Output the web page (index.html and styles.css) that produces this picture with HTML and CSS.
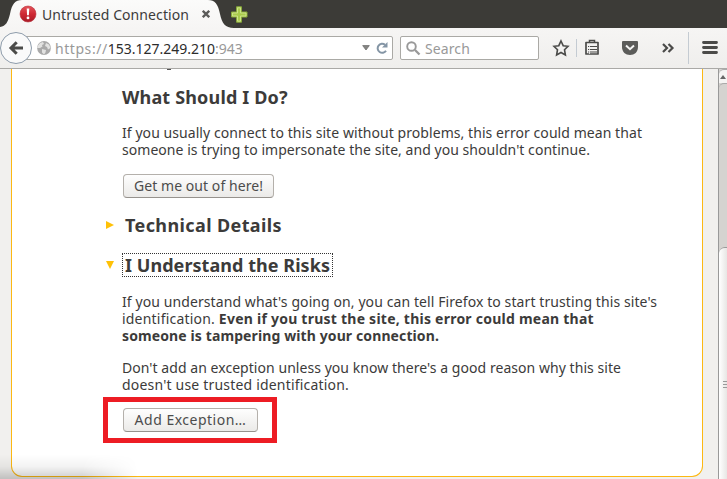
FILE: index.html
```
<!DOCTYPE html>
<html lang="en"><head><meta charset="utf-8"><title>Untrusted Connection</title><link rel="stylesheet" href="styles.css"></head>
<body>
<div class="browser">
  <header class="tabs">
    <svg class="tab-shape" width="240" height="28" viewBox="0 0 240 28"><defs><linearGradient id="tg" x2="0" y2="1"><stop stop-color="#fbfbfa"/><stop offset="1" stop-color="#f6f5f4"/></linearGradient></defs><path d="M0 28V27C6 26 8 22 10 14C12 4 15 0 22 0H208C215 0 218 4 220 14C222 23 225 28 234 28Z" fill="url(#tg)"/></svg>
    <div class="tab">
      <svg width="18" height="18" viewBox="0 0 18 18"><defs><linearGradient id="rg" x2="0" y2="1"><stop stop-color="#e2555b"/><stop offset=".5" stop-color="#cf2833"/><stop offset="1" stop-color="#a81a26"/></linearGradient></defs><circle cx="9" cy="9" r="8" fill="url(#rg)" stroke="#b8303a" stroke-width=".6"/><path d="M7.700 3.500h2.600L9.900 10.300H8.100Z" fill="#fff"/><circle cx="9" cy="12.900" r="1.400" fill="#fff"/></svg>
      <span class="tab-title">Untrusted Connection</span>
      <svg class="close" width="8" height="8" viewBox="0 0 8 8"><path d="M.8 .8L7.200 7.200M7.200 .8L.8 7.200" stroke="#5b5b59" stroke-width="2.300"/></svg>
    </div>
    <svg class="new-tab" width="17" height="17" viewBox="0 0 17 17"><path d="M5.500 .8h5V6h5.500v5h-5.500v5.200h-5V11H.5V6h5Z" fill="#a9cb4c" stroke="#88a93a" stroke-width="1"/><path d="M6.500 1.800h3V7H15v3H9.500v5.200h-3V10H1.500V7h5Z" fill="none" stroke="#cfe48f" stroke-width=".9"/></svg>
  </header>
  <nav class="toolbar">
    <div class="back"><svg width="16" height="16" viewBox="0 0 16 16"><path d="M8.700 2.300L3 8L8.700 13.700M3.500 8H15" fill="none" stroke="#4b4b49" stroke-width="3"/></svg></div>
    <div class="url">
      <svg width="14" height="14" viewBox="0 0 14 14"><circle cx="7" cy="7" r="6.900" fill="#a9a9a9"/><path d="M1 4.500L3 2L6 1L7 3L5 4L5.500 5.500L3 7L0 7ZM9 2L12 3.500L13.500 7L11 8.500L10 6L8 5ZM5 8L9 9L8.500 11.500L7 13.500L5 11.500Z" fill="#e2e2e1"/></svg>
      <span class="address"><span class="scheme">https://</span><span class="host">153.127.249.210</span><span class="port">:943</span></span>
      <svg class="drop" width="8" height="6" viewBox="0 0 8 6"><path d="M.7 .6H7.300L4 5Z" fill="#858583" stroke="#6f6f6d" stroke-width=".8"/></svg>
      <svg width="12" height="12" viewBox="0 0 12 12"><path d="M9 2.800A4.500 4.500 0 1 0 10 8.700" fill="none" stroke="#8495a5" stroke-width="2"/><path d="M6 5.500H11.500V0Z" fill="#8495a5"/></svg>
    </div>
    <div class="search"><svg width="15" height="15" viewBox="0 0 15 15"><circle cx="5.500" cy="5.500" r="4.300" fill="none" stroke="#999" stroke-width="1.900"/><path d="M9 9L13.500 13.500" stroke="#999" stroke-width="2.300"/></svg><span>Search</span></div>
    <svg class="tools" width="188" height="40" viewBox="0 0 188 40">
      <g fill="none" stroke="#4b4b49">
        <path d="M22 13L24.200 17.700L29 18.300L25.500 21.700L26.400 27L22 24.500L17.600 27L18.500 21.700L15 18.300L19.800 17.700Z" stroke-width="1.600"/>
        <path d="M47 14.500H59V26H47Z" stroke-width="1.700" stroke-linejoin="round"/><path d="M49 18.500H58M49 21.500H58M49 24H58" stroke-width="1.200"/><path d="M50.500 14V12.500H55.500V14" stroke-width="1.500"/>
        <path d="M124 16L128 20L124 24M129.500 16L133.500 20L129.500 24" stroke-width="2.200"/>
      </g>
      <path d="M50.500 16V26" stroke="#f4f3f2" stroke-width=".8"/>
      <path d="M37.500 11V29M149.500 4V36" stroke="#c4cbd2"/>
      <path d="M84 13H98Q99 13 99 14V19C99 24 95.500 27 91 27S83 24 83 19V14Q83 13 84 13Z" fill="#5c5c5a"/><path d="M87 17.500L91 21.200L95 17.500" fill="none" stroke="#f5f5f4" stroke-width="2"/>
      <path d="M164.500 14.500H177.500M164.500 19.500H177.500M164.500 24.500H177.500" stroke="#4b4b49" stroke-width="2.800" stroke-linecap="round"/>
    </svg>
  </nav>
  <main class="view">
    <div class="page">
      <article class="panel">
        <svg class="clipped" width="60" height="1"><path d="M45 0h4v1h-4Z" fill="#555"/></svg>
        <h2 class="what">What Should I Do?</h2>
        <p><span class="l1">If you usually connect to this site without problems, this error could mean that</span><span class="l2">someone is trying to impersonate the site, and you shouldn't continue.</span></p>
        <button class="leave">Get me out of here!</button>
        <div class="section tech"><svg width="8" height="8" viewBox="0 0 8 8"><path d="M0 0L8 4L0 8Z" fill="#ffc107"/></svg><h2>Technical Details</h2></div>
        <div class="section risks"><svg width="8" height="8" viewBox="0 0 8 8"><path d="M0 0H8L4 8Z" fill="#ffc107"/></svg><h2 class="focus">I Understand the Risks</h2></div>
        <p><span class="l3">If you understand what's going on, you can tell Firefox to start trusting this site's</span><span class="l4">identification. <b>Even if you trust the site, this error could mean that</b></span><b class="l5">someone is tampering with your connection.</b></p>
        <p class="reason"><span class="l6">Don't add an exception unless you know there's a good reason why this site</span><span class="l7">doesn't use trusted identification.</span></p>
        <div class="highlight"><button class="add">Add Exception…</button></div>
      </article>
      <div class="shade"></div>
    </div>
    <aside class="scrollbar"><div class="up"><svg width="6" height="4" viewBox="0 0 6 4"><path d="M0 4L3 0L6 4Z" fill="#666"/></svg></div><div class="track"></div><div class="thumb"><i></i><i></i><i></i></div></aside>
  </main>
</div>
</body></html>
```
FILE: styles.css
```
*{box-sizing:border-box}
body{margin:0;font:14px/17px "Noto Sans",sans-serif;color:#3c3b3a;overflow:hidden}
svg{display:block;flex:none}
.browser{width:727px;height:479px;display:flex;flex-direction:column;overflow:hidden}
.tabs{height:28px;background:#3c3b37;display:flex;position:relative;flex:none}
.tab-shape{position:absolute;left:0;top:0}
.tab{position:relative;width:230px;padding-left:19px;display:flex;align-items:center}
.tab-title{margin-left:5px;width:148px;letter-spacing:.085px;white-space:nowrap}
.close{margin-left:12px}
.new-tab{position:relative;margin:6px 0 0 1px}
.toolbar{height:41px;flex:none;background:linear-gradient(#f6f5f4,#efeeec);border-bottom:1px solid #aaa9a6;display:flex;align-items:flex-start}
.back{width:32px;height:32px;border:1px solid #8e9cab;border-radius:50%;background:#fafafa;margin-top:4px;display:flex;align-items:center;justify-content:center;flex:none;position:relative}
.url{width:377px;height:24px;margin:8px 0 0 -16px;padding:0 4px 0 20px;background:#fff;border:1px solid #aaa9a5;border-radius:2px;display:flex;align-items:center;flex:none}
.address{margin-left:4px;white-space:nowrap;flex:1}
.scheme{color:#999;letter-spacing:.56px}
.host{color:#2c2c2c}
.port{color:#999}
.drop{margin-right:6px}
.search{width:139px;height:24px;margin:8px 0 0 7px;padding-left:5px;background:#fff;border:1px solid #aaa9a5;border-radius:2px;display:flex;align-items:center;gap:4px;color:#999;letter-spacing:.1px;flex:none}
.view{flex:1;display:flex;background:#f1f0ee;min-height:0}
.page{width:718px;height:410px;position:relative}
.panel{width:692px;height:408px;margin-left:11px;border:1px solid #fcb813;border-top:0;border-radius:0 0 11px 11px;background:#fff;padding-left:110px}
h2{margin:0;font-size:18px;line-height:22px;white-space:nowrap}
p{margin:0}
p span,p>b{display:block;white-space:nowrap}
.what{margin-top:16px;letter-spacing:.16px}
.what+p{margin-top:16px}
.l1{letter-spacing:.066px}.l2{letter-spacing:.046px}.l3{letter-spacing:.09px}.l4{letter-spacing:.2px}.l4 b{letter-spacing:.24px}.l5{letter-spacing:.11px}.l6{letter-spacing:.049px}.l7{letter-spacing:.19px}
button{display:block;height:24px;padding:0;font:14px/20px "Noto Sans",sans-serif;color:#4c4c4c;border:1px solid #b4b0ab;border-bottom-color:#96928d;border-radius:4px;background:linear-gradient(#fefefe,#ebeae8);white-space:nowrap}
.leave{width:151px;margin:16px 0 0 1px;letter-spacing:.06px}
.section{display:flex;align-items:center;margin-left:-16px}
.section h2{margin-left:11px}
.tech{margin-top:16px}
.tech h2{letter-spacing:.39px}
.risks{margin-top:17px}
.risks .focus{margin-left:8px;width:211px;height:24px;padding-left:2px;border:1px dotted #333;letter-spacing:.05px}
.risks+p{margin-top:16px}
.reason{margin-top:15px}
.highlight{width:174px;height:46px;margin:4px 0 0 -19px;border:5px solid #ed1c24;padding:6px 0 0 15px}
.add{width:135px;letter-spacing:.5px}
.shade{position:absolute;left:0;bottom:0;width:150px;height:24px;background:linear-gradient(transparent,rgba(0,0,0,.05) 50%,rgba(0,0,0,.2));-webkit-mask-image:linear-gradient(90deg,#000 55%,transparent 92%)}
.scrollbar{width:9px;border-left:1px solid #999;background:#d5d3d0;display:flex;flex-direction:column}
.up{height:14px;border-top:1px solid #aaa;border-top-left-radius:5px;background:#f5f4f3;display:flex;align-items:center;justify-content:center}
.track{height:164px;border-top:1px solid #aaa;border-top-left-radius:5px}
.thumb{flex:1;border-top:1px solid #999;border-top-left-radius:6px;background:linear-gradient(90deg,#fff,#e7e6e4);padding:133px 0 0 4px;display:flex;flex-direction:column;gap:2px}
.thumb i{height:1px;background:#999}
```
